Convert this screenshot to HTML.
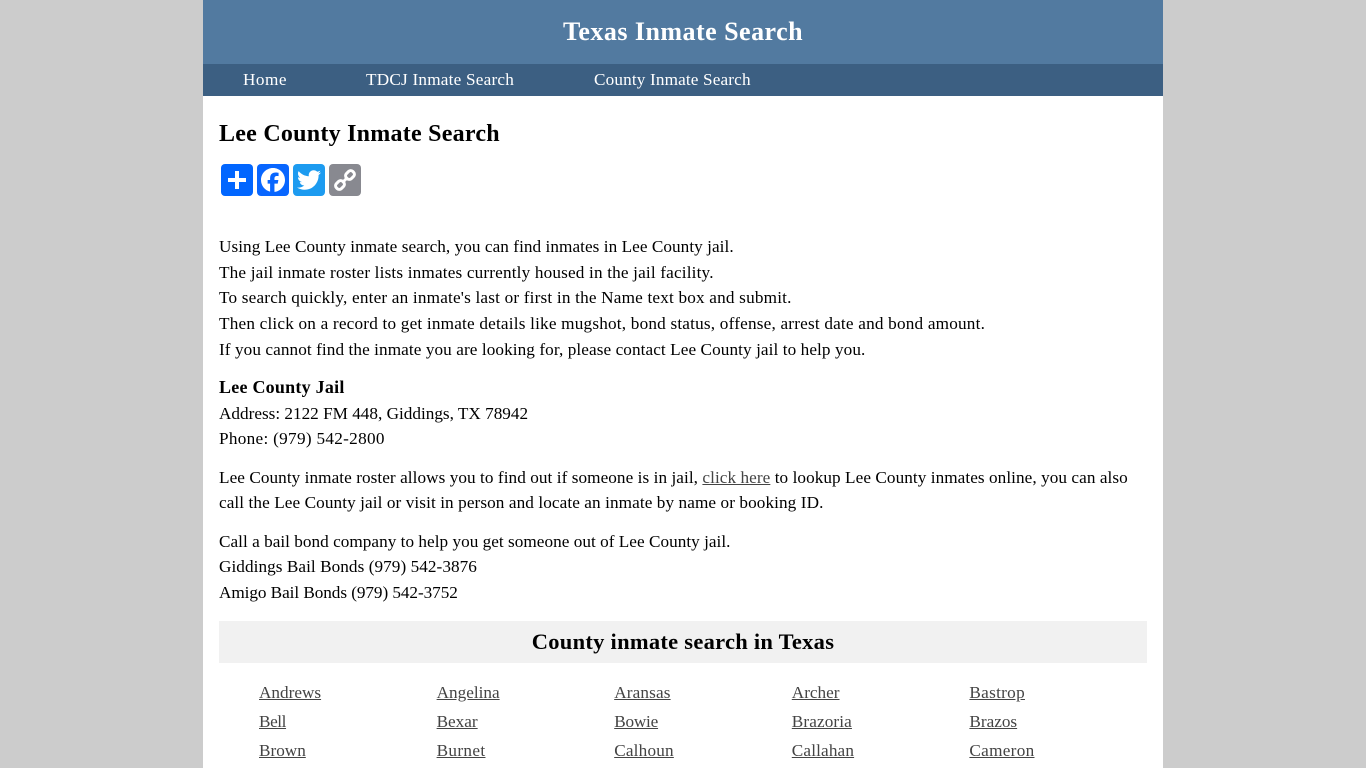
<!DOCTYPE html>
<html lang="en"><head><meta charset="utf-8"><title>Lee County Inmate Search</title>
<style>
*{box-sizing:border-box}
html,body{margin:0;padding:0;height:768px;overflow:hidden;background:#ccc}
body{font-family:"Liberation Serif",serif;font-size:17.2px;line-height:25.6px;color:#000}
#w{position:relative;width:960px;height:768px;margin-left:203px;background:#fff;overflow:hidden}
#hd{height:64px;background:#527aa0;color:#fff;text-align:center;font-weight:bold;font-size:26px;line-height:64px;letter-spacing:.47px}
#nav{height:32px;background:#3c5f82;position:relative}
#nav a{position:absolute;top:0;color:#fff;text-decoration:none;line-height:31px}
h1{position:absolute;left:16px;top:120px;margin:0;font-size:24px;line-height:28px;letter-spacing:.25px}
#sh{position:absolute;left:18px;top:164px;display:flex;gap:4px}
#sh svg{width:32px;height:32px;border-radius:4px;display:block}
#t{position:absolute;left:16px;top:234.3px;width:928px}
p{margin:0 0 12.8px}
a{color:#444}
h2{position:absolute;left:16px;top:621px;width:928px;height:42px;margin:0;background:#f1f1f1;text-align:center;font-size:22.5px;line-height:41px;letter-spacing:.27px}
#l a{position:absolute}
</style></head><body><div id="w">
<div id="hd">Texas Inmate Search</div>
<div id="nav"><a href="#" style="left:40px;letter-spacing:.5px">Home</a><a href="#" style="left:163px;letter-spacing:.22px">TDCJ Inmate Search</a><a href="#" style="left:391px;letter-spacing:.15px">County Inmate Search</a></div>
<h1>Lee County Inmate Search</h1>
<div id="sh">
<svg viewBox="0 0 32 32" style="background:#0166ff"><path fill="#fff" d="M14 7h4v18h-4z"/><path fill="#fff" d="M7 14h18v4H7z"/></svg>
<svg viewBox="0 0 32 32" style="background:#0866ff"><path fill="#fff" d="M28 16c0-6.627-5.373-12-12-12S4 9.373 4 16c0 5.628 3.875 10.35 9.101 11.647v-7.98h-2.474V16H13.1v-1.58c0-4.085 1.849-5.978 5.859-5.978.76 0 2.072.15 2.608.298v3.325c-.283-.03-.775-.045-1.386-.045-1.967 0-2.728.745-2.728 2.683V16h3.92l-.673 3.667h-3.247v8.245C23.395 27.195 28 22.135 28 16"/></svg>
<svg viewBox="0 0 32 32" style="background:#1d9bf0"><path fill="#fff" d="M28 8.557a10 10 0 0 1-2.828.775 4.93 4.93 0 0 0 2.166-2.725 9.7 9.7 0 0 1-3.13 1.194 4.92 4.92 0 0 0-3.593-1.55 4.924 4.924 0 0 0-4.794 6.049c-4.09-.21-7.72-2.17-10.15-5.15a4.94 4.94 0 0 0-.665 2.477c0 1.71.87 3.214 2.19 4.1a5 5 0 0 1-2.23-.616v.06c0 2.39 1.7 4.38 3.952 4.83-.414.115-.85.174-1.297.174q-.476-.001-.928-.086a4.935 4.935 0 0 0 4.6 3.42 9.9 9.9 0 0 1-6.114 2.107q-.597 0-1.175-.068a13.95 13.95 0 0 0 7.55 2.213c9.056 0 14.01-7.507 14.01-14.013q0-.32-.015-.637c.96-.695 1.795-1.56 2.455-2.55z"/></svg>
<svg viewBox="0 0 32 32" style="background:#888990"><g fill="none" stroke="#fff" stroke-width="3"><rect x="16.5" y="7.5" width="9" height="7" rx="3" transform="rotate(-45 21 11)"/><rect x="6.5" y="17.5" width="9" height="7" rx="3" transform="rotate(-45 11 21)"/><path d="M13.5 18.5l5-5"/></g></svg>
</div>
<div id="t">
<p><span style="letter-spacing:.055px">Using Lee County inmate search, you can find inmates in Lee County jail.</span><br><span style="letter-spacing:.17px">The jail inmate roster lists inmates currently housed in the jail facility.</span><br><span style="letter-spacing:.19px">To search quickly, enter an inmate's last or first in the Name text box and submit.</span><br><span style="letter-spacing:.2px">Then click on a record to get inmate details like mugshot, bond status, offense, arrest date and bond amount.</span><br><span style="letter-spacing:.085px">If you cannot find the inmate you are looking for, please contact Lee County jail to help you.</span></p>
<p><b style="font-size:18px;letter-spacing:.24px">Lee County Jail</b><br>Address: 2122 FM 448, Giddings, TX 78942<br><span style="letter-spacing:.3px">Phone: (979) 542-2800</span></p>
<p><span style="letter-spacing:.065px">Lee County inmate roster allows you to find out if someone is in jail, <a href="#">click here</a> to lookup Lee County inmates online, you can also</span><br><span style="letter-spacing:.09px">call the Lee County jail or visit in person and locate an inmate by name or booking ID.</span></p>
<p><span style="letter-spacing:.03px">Call a bail bond company to help you get someone out of Lee County jail.</span><br><span style="letter-spacing:.06px">Giddings Bail Bonds (979) 542-3876</span><br><span style="letter-spacing:-.06px">Amigo Bail Bonds (979) 542-3752</span></p>
</div>
<h2>County inmate search in Texas</h2>
<div id="l">
<a href="#" style="left:56px;top:680px">Andrews</a><a href="#" style="left:233.6px;top:680px">Angelina</a><a href="#" style="left:411.2px;top:680px;letter-spacing:.15px">Aransas</a><a href="#" style="left:588.8px;top:680px">Archer</a><a href="#" style="left:766.4px;top:680px;letter-spacing:.3px">Bastrop</a>
<a href="#" style="left:56px;top:709px;letter-spacing:-.4px">Bell</a><a href="#" style="left:233.6px;top:709px">Bexar</a><a href="#" style="left:411.2px;top:709px;letter-spacing:-.2px">Bowie</a><a href="#" style="left:588.8px;top:709px;letter-spacing:.12px">Brazoria</a><a href="#" style="left:766.4px;top:709px">Brazos</a>
<a href="#" style="left:56px;top:738px">Brown</a><a href="#" style="left:233.6px;top:738px;letter-spacing:.35px">Burnet</a><a href="#" style="left:411.2px;top:738px;letter-spacing:.2px">Calhoun</a><a href="#" style="left:588.8px;top:738px;letter-spacing:.15px">Callahan</a><a href="#" style="left:766.4px;top:738px;letter-spacing:.3px">Cameron</a>
</div>
</div></body></html>
